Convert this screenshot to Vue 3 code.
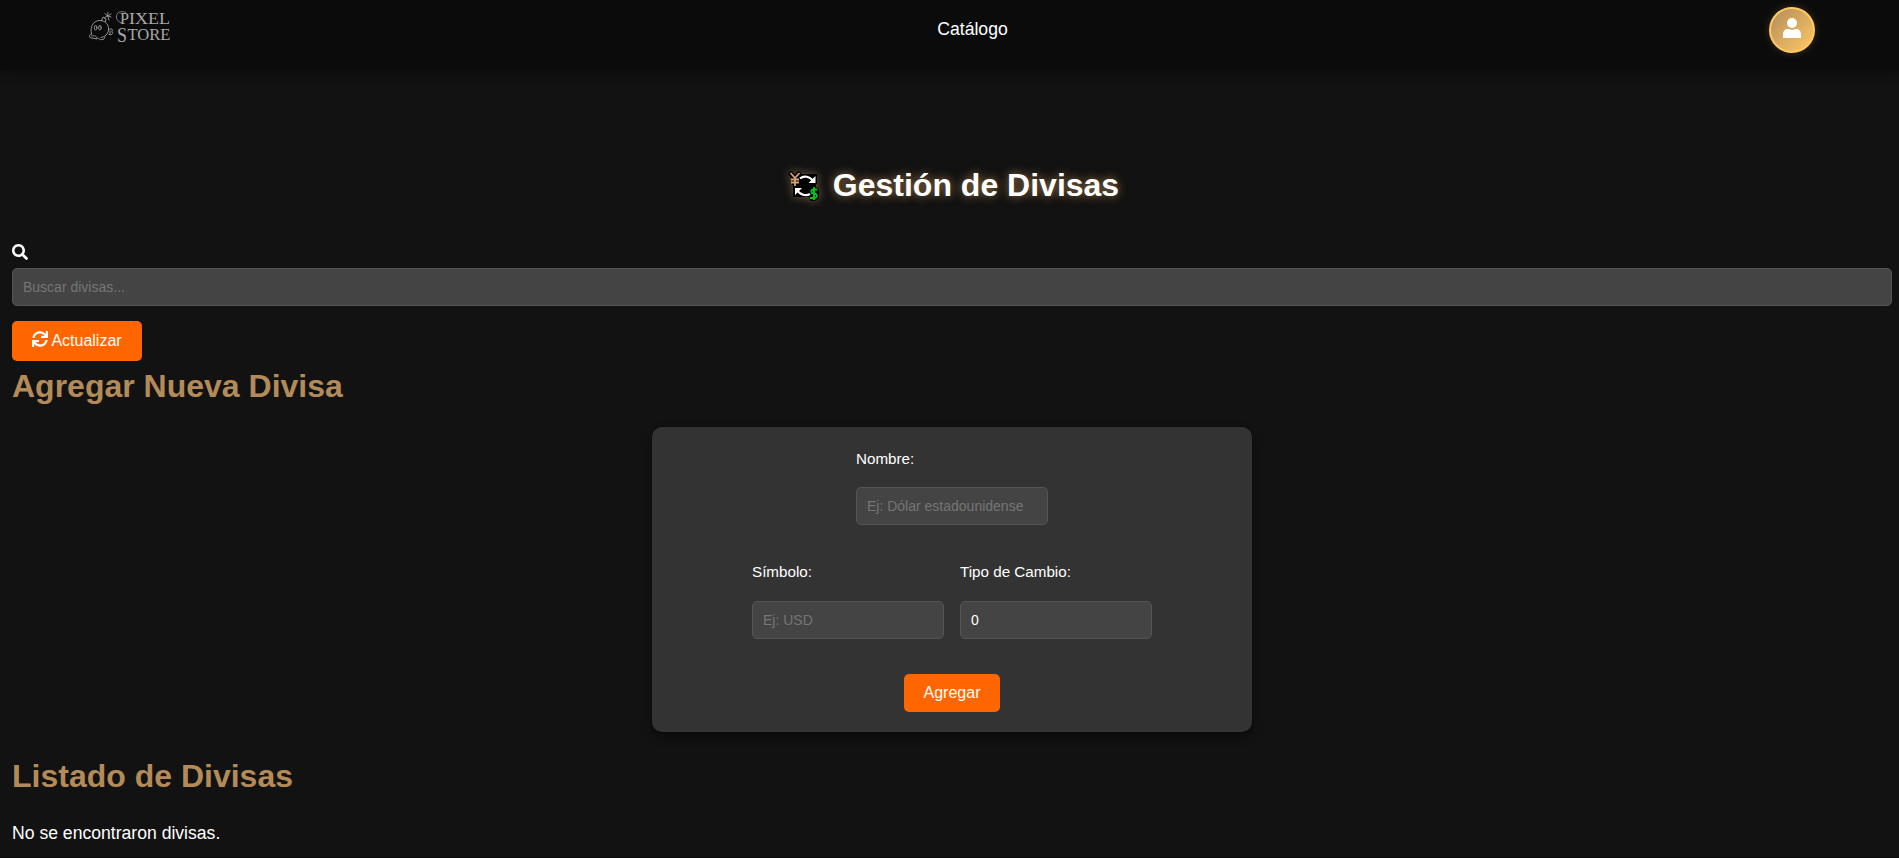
<script setup>
import { ref } from 'vue'

const search = ref('')
const name = ref('')
const symbol = ref('')
const rate = ref('0')
</script>

<template>
  <div class="page">
    <header class="topbar">
      <svg class="logo" width="90" height="44" viewBox="0 0 90 44">
        <g fill="none" stroke="#a8a8a8" stroke-width="0.85" stroke-linecap="round">
          <path d="M4.500 32C2.500 24 7 18.500 12.500 18.500C19 18.500 22 23 21.500 28C21 32 18 35 14 35.500" />
          <path d="M4.500 32C1 32.500 2 36.500 5 36L10 37C10.500 34.500 7.500 33 4.500 34M11 36C12 38.500 18 38.500 18 35" />
          <ellipse cx="8.700" cy="25.700" rx="1.300" ry="2.300" />
          <ellipse cx="12.900" cy="25.700" rx="1.300" ry="2.300" />
          <path d="M14.500 18.500L16 15L19 17L18.500 19.500M17.500 16L20 14M20.500 14L18 11.500M20.500 14L21 10.500M21 14L24 12M21 14L24 15M21 15L22 18" />
          <path d="M22 28C24 25 27 28 24.500 30C27 30 25.500 34 22 32.500M23 29V32" />
        </g>
        <path d="M39 10.500C27 6 27 20.500 35 20.500" fill="none" stroke="#a8a8a8" stroke-width="0.7" />
        <g class="wordmark" fill="#a8a8a8">
          <text x="33" y="22" font-size="17.500" textLength="9" lengthAdjust="spacingAndGlyphs">P</text>
          <text x="42" y="22" font-size="17" textLength="41" lengthAdjust="spacingAndGlyphs">IXEL</text>
          <text x="30" y="39.500" font-size="20" textLength="10" lengthAdjust="spacingAndGlyphs">S</text>
          <text x="40.500" y="37.500" font-size="17" textLength="43" lengthAdjust="spacingAndGlyphs">TORE</text>
        </g>
      </svg>
      <a class="navlink">Catálogo</a>
      <button class="avatar" aria-label="Usuario">
        <svg width="18" height="20" viewBox="0 0 18 20" fill="#fff">
          <circle cx="9" cy="5" r="5" />
          <path d="M0 20V16.5C0 13 2 11 5 11C7.500 12 10.500 12 13 11C16 11 18 13 18 16.500V20Z" />
        </svg>
      </button>
    </header>

    <main class="content">
      <h1 class="title">
        <svg class="exchange" width="32" height="32" viewBox="0 0 32 32">
          <path d="M12 4H29V14H28V17L31 19V28L27 31H23L21 27H5V15H4V9L0 4L3 1L7 4L10 1L14 3Z" fill="#000" />
          <g fill="none" stroke="#d5a077" stroke-width="1.800">
            <path d="M2.500 3L7 8L11.500 3M7 7.500V16M3 9.500H11M3 12.500H11" />
          </g>
          <g fill="none" stroke="#fff" stroke-width="2.200">
            <path d="M12 8.500C16 5 22 6.500 25 11M22 24C18 26.500 12 25 9 20" />
          </g>
          <path d="M20.500 13H27.500V6ZM7 18H14L7 25Z" fill="#fff" />
          <path d="M29.500 19.500H26C22.500 19.500 22.500 23.500 26 23.500C30 23.500 29.500 28 26 28H22M26 17V30" fill="none" stroke="#09c51b" stroke-width="1.900" />
        </svg>
        <span>Gestión de Divisas</span>
      </h1>

      <div class="search">
        <svg width="16" height="16" viewBox="0 0 512 512" fill="#fff">
          <path d="M505 442.700L405.300 343c-4.500-4.500-10.600-7-17-7H372c27.600-35.300 44-79.700 44-128C416 93.100 322.900 0 208 0S0 93.100 0 208s93.100 208 208 208c48.300 0 92.700-16.400 128-44v16.300c0 6.400 2.500 12.500 7 17l99.700 99.700c9.400 9.400 24.600 9.400 33.900 0l28.300-28.300c9.400-9.400 9.400-24.600.1-34zM208 336c-70.700 0-128-57.200-128-128 0-70.700 57.200-128 128-128 70.700 0 128 57.200 128 128 0 70.700-57.200 128-128 128z" />
        </svg>
        <input v-model="search" class="input" placeholder="Buscar divisas..." />
      </div>

      <button class="btn refresh">
        <svg width="16" height="16" viewBox="0 0 512 512" fill="#fff">
          <path d="M440.650 12.570l4 82.770A247.160 247.160 0 0 0 255.830 8C134.730 8 33.910 94.920 12.290 209.820A12 12 0 0 0 24.090 224h49.050a12 12 0 0 0 11.670-9.260 175.910 175.910 0 0 1 317-56.940l-101.460-4.860a12 12 0 0 0-12.570 12v47.410a12 12 0 0 0 12 12H500a12 12 0 0 0 12-12V12a12 12 0 0 0-12-12h-47.370a12 12 0 0 0-11.980 12.570zM255.830 432a175.610 175.610 0 0 1-146-77.800l101.800 4.870a12 12 0 0 0 12.570-12v-47.400a12 12 0 0 0-12-12H12a12 12 0 0 0-12 12V500a12 12 0 0 0 12 12h47.350a12 12 0 0 0 12-12.600l-4.150-82.570A247.170 247.170 0 0 0 255.830 504c121.110 0 221.930-86.920 243.550-201.820a12 12 0 0 0-11.800-14.180h-49.050a12 12 0 0 0-11.670 9.260A175.860 175.860 0 0 1 255.830 432z" />
        </svg>
        <span>Actualizar</span>
      </button>

      <h2 class="heading">Agregar Nueva Divisa</h2>
      <form class="card" @submit.prevent>
        <label class="field">
          <span>Nombre:</span>
          <input v-model="name" class="input" placeholder="Ej: Dólar estadounidense" />
        </label>
        <div class="pair">
          <label class="field">
            <span>Símbolo:</span>
            <input v-model="symbol" class="input" placeholder="Ej: USD" />
          </label>
          <label class="field">
            <span>Tipo de Cambio:</span>
            <input v-model="rate" class="input" />
          </label>
        </div>
        <button class="btn add">Agregar</button>
      </form>

      <h2 class="heading list-heading">Listado de Divisas</h2>
      <p class="empty">No se encontraron divisas.</p>
    </main>
  </div>
</template>

<style>
html,
body {
  background: #121212;
  overflow: hidden;
}
</style>

<style scoped>
.page {
  box-sizing: border-box;
  height: 858px;
  border-bottom: 1px solid #0b0a0b;
  background: #121212;
  color: #fff;
  font-family: "Liberation Sans", Arial, sans-serif;
}
.topbar {
  display: grid;
  grid-template-columns: 1fr auto 1fr;
  align-items: start;
  box-sizing: border-box;
  height: 70px;
  padding: 0 84px 0 87px;
  background: #0b0b0b;
  box-shadow: 0 4px 10px rgba(0, 0, 0, 0.3);
}
.logo {
  margin-top: 2px;
}
.wordmark {
  font-family: "Liberation Serif", serif;
}
.navlink {
  margin: 19px 0 0 43px;
  font-size: 17.600px;
  line-height: 20px;
}
.avatar {
  display: flex;
  justify-content: center;
  justify-self: end;
  box-sizing: border-box;
  width: 46px;
  height: 46px;
  margin-top: 7px;
  padding: 9px 0 0;
  border: 2px solid #ffc966;
  border-radius: 50%;
  background: linear-gradient(135deg, #b38b59, #ffc966);
  box-shadow: 0 0 8px rgba(255, 201, 102, 0.2);
}
.content {
  padding: 0 7px 0 12px;
}
.title {
  display: flex;
  align-items: center;
  justify-content: center;
  gap: 13px;
  height: 37px;
  margin: 97px 0 0;
  padding-left: 3px;
  font-size: 32px;
  text-shadow: 0 0 10px rgba(230, 175, 105, 0.65);
}
.exchange {
  filter: drop-shadow(0 0 4px rgba(179, 139, 89, 0.6));
}
.search {
  display: flex;
  flex-direction: column;
  gap: 8px;
  margin-top: 40px;
}
.input {
  box-sizing: border-box;
  width: 100%;
  height: 38px;
  padding: 0 10px;
  border: 1px solid #555;
  border-radius: 5px;
  outline: 0;
  background: #444;
  color: #fff;
  font: 14px "Liberation Sans", Arial, sans-serif;
}
.input::placeholder {
  color: #757575;
  opacity: 1;
}
.btn {
  display: flex;
  align-items: center;
  justify-content: center;
  padding: 0;
  border: 0;
  border-radius: 5px;
  background: #ff6600;
  color: #fff;
  font: 16px "Liberation Sans", Arial, sans-serif;
}
.refresh {
  gap: 3px;
  width: 130px;
  height: 40px;
  margin-top: 15px;
}
.refresh svg {
  margin-bottom: 4px;
}
.heading {
  margin: 7px 0 0;
  color: #b38b59;
  font-size: 32px;
  line-height: 36px;
}
.card {
  display: flex;
  flex-direction: column;
  align-items: center;
  box-sizing: border-box;
  width: 600px;
  height: 305px;
  margin: 23px auto 0;
  padding-top: 23px;
  border-radius: 10px;
  background: #333;
  box-shadow: 0 4px 10px rgba(0, 0, 0, 0.5);
}
.field {
  display: flex;
  flex-direction: column;
  gap: 19px;
  width: 192px;
  font-size: 15.200px;
  line-height: 18px;
}
.pair {
  display: flex;
  gap: 16px;
  margin-top: 38px;
}
.pair .field {
  gap: 20px;
}
.add {
  width: 96px;
  height: 38px;
  margin-top: 35px;
}
.list-heading {
  margin-top: 26px;
}
.empty {
  margin: 29px 0 0;
  font-size: 17.600px;
  line-height: 20px;
}
</style>
